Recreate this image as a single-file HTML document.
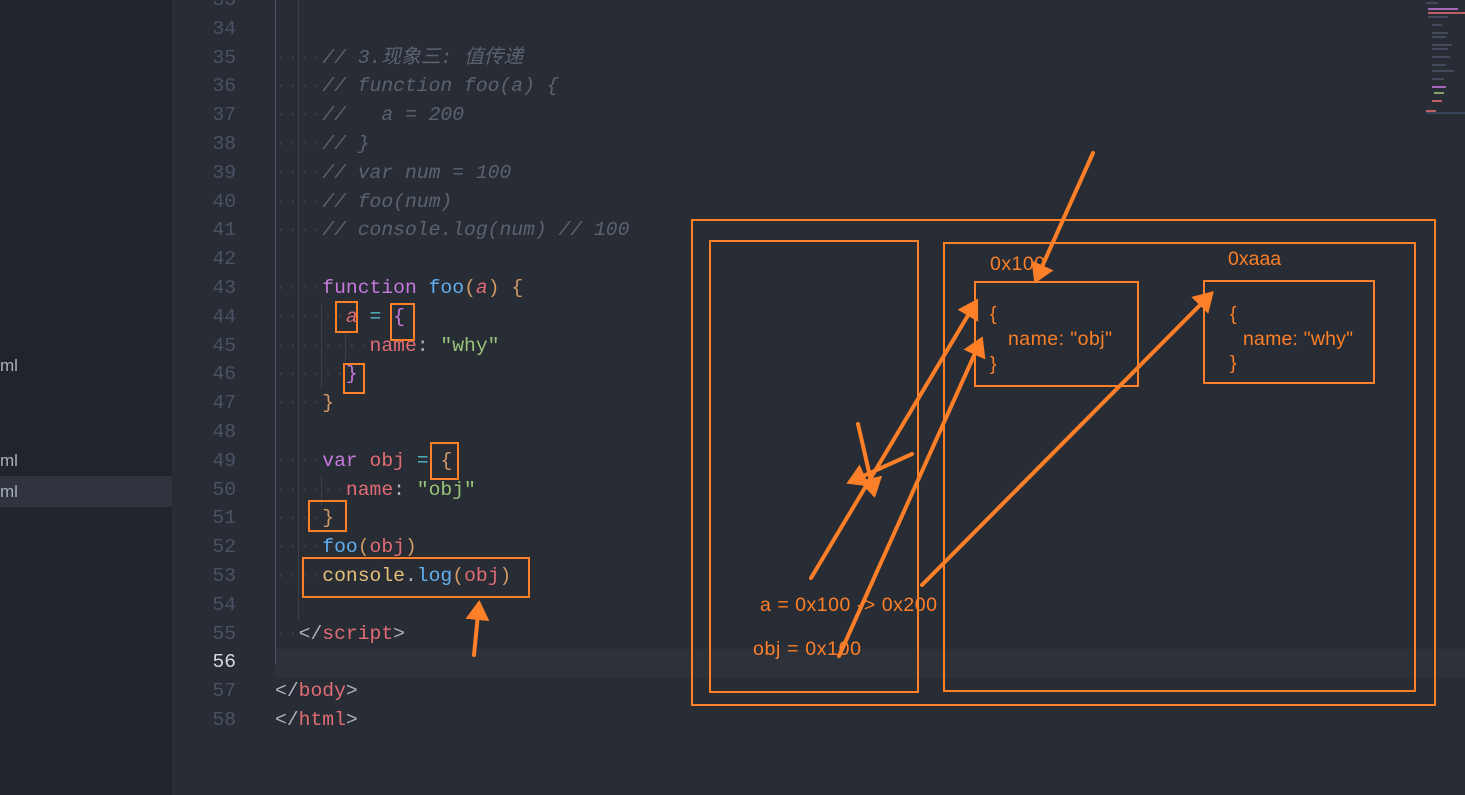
<!DOCTYPE html>
<html><head><meta charset="utf-8"><style>
html,body{margin:0;padding:0;width:1465px;height:795px;overflow:hidden;background:#282c34}
#side{position:absolute;left:0;top:0;width:172px;height:795px;background:#21252b}
.si{position:absolute;left:0;font:17px "Liberation Sans",sans-serif;color:#a8b0bd}
#hl{position:absolute;left:0;top:476px;width:172px;height:31px;background:#2f343e}
#cur{position:absolute;left:275px;top:649px;width:1190px;height:29px;background:#2c313a}
.ln{position:absolute;left:180px;width:56px;text-align:right;font:19.6px "Liberation Mono",monospace;color:#4b5263;line-height:28.8px}
.cl{position:absolute;left:275px;font:19.7px "Liberation Mono","Noto Sans CJK SC",monospace;color:#abb2bf;white-space:pre;line-height:28.8px}
.d{color:#363b44}
.c{color:#5c6370;font-style:italic}
.k{color:#c678dd}.f{color:#61afef}.r{color:#e06c75}.g{color:#98c379}.o{color:#d19a66}.cy{color:#56b6c2}.y{color:#e5c07b}.i{font-style:italic}
.gd{position:absolute;width:1px;background:#3b4048}
svg{position:absolute;left:0;top:0}
</style></head><body>
<div id="side"></div><div id="hl"></div>
<div class="si" style="top:356px">ml</div>
<div class="si" style="top:451px">ml</div>
<div class="si" style="top:482px">ml</div>
<div id="cur"></div>
<div class="gd" style="left:275px;top:0;height:664px;background:#4b5263"></div>
<div class="gd" style="left:298px;top:0;height:620px"></div>
<div class="gd" style="left:321px;top:303px;height:86px"></div>
<div class="gd" style="left:345px;top:332px;height:30px"></div>
<div class="gd" style="left:321px;top:476px;height:30px"></div>

<div class="ln" style="top:-14px">33</div>
<div class="ln" style="top:15px">34</div>
<div class="ln" style="top:44px">35</div>
<div class="ln" style="top:72px">36</div>
<div class="ln" style="top:101px">37</div>
<div class="ln" style="top:130px">38</div>
<div class="ln" style="top:159px">39</div>
<div class="ln" style="top:188px">40</div>
<div class="ln" style="top:216px">41</div>
<div class="ln" style="top:245px">42</div>
<div class="ln" style="top:274px">43</div>
<div class="ln" style="top:303px">44</div>
<div class="ln" style="top:332px">45</div>
<div class="ln" style="top:360px">46</div>
<div class="ln" style="top:389px">47</div>
<div class="ln" style="top:418px">48</div>
<div class="ln" style="top:447px">49</div>
<div class="ln" style="top:476px">50</div>
<div class="ln" style="top:504px">51</div>
<div class="ln" style="top:533px">52</div>
<div class="ln" style="top:562px">53</div>
<div class="ln" style="top:591px">54</div>
<div class="ln" style="top:620px">55</div>
<div class="ln" style="top:648px;color:#d7dae0">56</div>
<div class="ln" style="top:677px">57</div>
<div class="ln" style="top:706px">58</div>

<div class="cl" style="top:44px"><span class="d">····</span><span class="c">// 3.现象三: 值传递</span></div>
<div class="cl" style="top:72px"><span class="d">····</span><span class="c">// function foo(a) {</span></div>
<div class="cl" style="top:101px"><span class="d">····</span><span class="c">//   a = 200</span></div>
<div class="cl" style="top:130px"><span class="d">····</span><span class="c">// }</span></div>
<div class="cl" style="top:159px"><span class="d">····</span><span class="c">// var num = 100</span></div>
<div class="cl" style="top:188px"><span class="d">····</span><span class="c">// foo(num)</span></div>
<div class="cl" style="top:216px"><span class="d">····</span><span class="c">// console.log(num) // 100</span></div>
<div class="cl" style="top:274px"><span class="d">····</span><span class="k">function</span> <span class="f">foo</span><span class="o">(</span><span class="r i">a</span><span class="o">)</span> <span class="o">{</span></div>
<div class="cl" style="top:303px"><span class="d">······</span><span class="r i">a</span> <span class="cy">=</span> <span class="k">{</span></div>
<div class="cl" style="top:332px"><span class="d">········</span><span class="r">name</span>: <span class="g">"why"</span></div>
<div class="cl" style="top:360px"><span class="d">······</span><span class="k">}</span></div>
<div class="cl" style="top:389px"><span class="d">····</span><span class="o">}</span></div>
<div class="cl" style="top:447px"><span class="d">····</span><span class="k">var</span> <span class="r">obj</span> <span class="cy">=</span> <span class="o">{</span></div>
<div class="cl" style="top:476px"><span class="d">······</span><span class="r">name</span>: <span class="g">"obj"</span></div>
<div class="cl" style="top:504px"><span class="d">····</span><span class="o">}</span></div>
<div class="cl" style="top:533px"><span class="d">····</span><span class="f">foo</span><span class="o">(</span><span class="r">obj</span><span class="o">)</span></div>
<div class="cl" style="top:562px"><span class="d">····</span><span class="y">console</span>.<span class="f">log</span><span class="o">(</span><span class="r">obj</span><span class="o">)</span></div>
<div class="cl" style="top:620px"><span class="d">··</span>&lt;/<span class="r">script</span>&gt;</div>
<div class="cl" style="top:677px">&lt;/<span class="r">body</span>&gt;</div>
<div class="cl" style="top:706px">&lt;/<span class="r">html</span>&gt;</div>

<svg width="1465" height="795" viewBox="0 0 1465 795">
<defs><marker id="ah" markerWidth="6" markerHeight="6" refX="4" refY="3" orient="auto" markerUnits="strokeWidth"><path d="M0,0 L5,3 L0,6 Z" fill="#fd7f28"/></marker></defs>
<g fill="#4b5263" opacity="0.8">
<rect x="1426" y="2" width="12" height="2"/><rect x="1428" y="8" width="30" height="2" fill="#c678dd"/><rect x="1428" y="12" width="38" height="2" fill="#e06c75"/><rect x="1428" y="16" width="20" height="2"/>
<rect x="1432" y="24" width="10" height="2"/><rect x="1432" y="32" width="16" height="2"/><rect x="1432" y="36" width="14" height="2"/><rect x="1432" y="44" width="20" height="2"/><rect x="1432" y="48" width="16" height="2"/><rect x="1432" y="56" width="18" height="2"/><rect x="1432" y="64" width="14" height="2"/><rect x="1432" y="70" width="22" height="2"/><rect x="1432" y="78" width="12" height="2"/><rect x="1432" y="86" width="14" height="2" fill="#c678dd"/><rect x="1434" y="92" width="10" height="2" fill="#98c379"/><rect x="1432" y="100" width="10" height="2" fill="#e06c75"/><rect x="1426" y="110" width="10" height="2" fill="#e06c75"/><rect x="1426" y="112" width="39" height="2" fill="#3a4a60"/>
</g>
<g fill="none" stroke="#fd7f28" stroke-width="2">
<rect x="336" y="302" width="21" height="30"/>
<rect x="391" y="304" width="23" height="36"/>
<rect x="344" y="364" width="20" height="29"/>
<rect x="431" y="443" width="27" height="36"/>
<rect x="309" y="501" width="37" height="30"/>
<rect x="303" y="558" width="226" height="39"/>
<rect x="692" y="220" width="743" height="485"/>
<rect x="710" y="241" width="208" height="451"/>
<rect x="944" y="243" width="471" height="448"/>
<rect x="975" y="282" width="163" height="104"/>
<rect x="1204" y="281" width="170" height="102"/>
</g>
<g stroke="#fd7f28" stroke-width="4" stroke-linecap="round" marker-end="url(#ah)">
<line x1="474" y1="655" x2="479" y2="604"/>
<line x1="1093" y1="153" x2="1036" y2="280"/>
<line x1="811" y1="578" x2="976" y2="302"/>
<line x1="839" y1="656" x2="981" y2="340"/>
<line x1="922" y1="585" x2="1211" y2="294"/>
<line x1="912" y1="454" x2="850" y2="482"/>
<line x1="858" y1="424" x2="874" y2="494"/>
</g>
<g fill="#fd7f28" font-family="Liberation Sans, sans-serif" font-size="19.5">
<text x="990" y="270" textLength="55">0x100</text>
<text x="1228" y="265">0xaaa</text>
<text x="990" y="320">{</text>
<text x="1008" y="345" textLength="104">name: "obj"</text>
<text x="990" y="370">}</text>
<text x="1230" y="320">{</text>
<text x="1243" y="345" textLength="110">name: "why"</text>
<text x="1230" y="369">}</text>
<text x="760" y="611" textLength="177">a = 0x100 -&gt; 0x200</text>
<text x="753" y="655" textLength="108">obj = 0x100</text>
</g>
</svg>
</body></html>
